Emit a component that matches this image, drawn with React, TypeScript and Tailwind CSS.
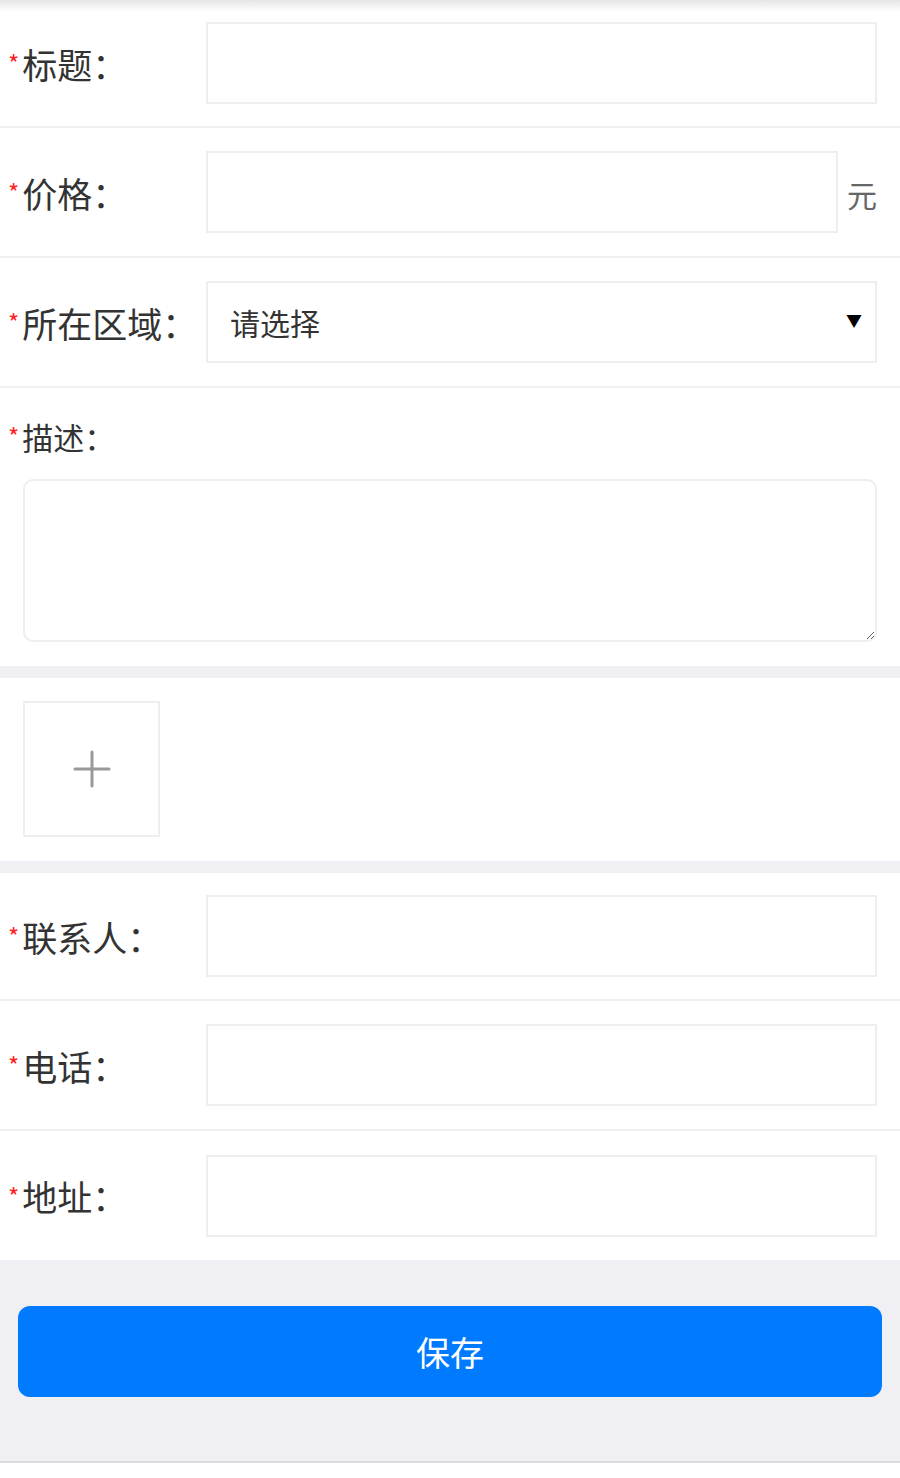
const font = { fontFamily: '"Noto Sans CJK SC", "Noto Sans", sans-serif' };

function Label({ text, size = "text-[35px]" }: { text: string; size?: string }) {
  return (
    <div className={`flex items-center text-[#333] ${size}`}>
      <span className="text-[24px] text-[#ff2020] mr-[3px] leading-none">*</span>
      <span className="leading-none">{text}：</span>
    </div>
  );
}

function Row({ label, children, first }: { label: string; children: React.ReactNode; first?: boolean }) {
  return (
    <div
      className={`flex items-center bg-white border-b-2 border-[#efeff4] pr-[23px] ${first ? "h-[128px]" : "h-[130px]"}`}
    >
      <div className="w-[206px] pl-[8px] shrink-0">
        <Label text={label} />
      </div>
      {children}
    </div>
  );
}

function TextInput() {
  return <input type="text" className="flex-1 min-w-0 h-[82px] border-2 border-[#eeeeee] bg-white outline-none px-4 text-[30px]" />;
}

export default function App() {
  return (
    <div className="w-[900px] min-h-[1478px] bg-white" style={font}>
      {/* top section */}
      <div className="relative">
        <div className="absolute top-0 left-0 right-0 h-[12px] bg-gradient-to-b from-[#e6e6e6] to-transparent pointer-events-none" />
        <Row label="标题" first>
          <TextInput />
        </Row>
        <Row label="价格">
          <TextInput />
          <span className="w-[39px] text-right text-[30px] text-[#666] leading-none pt-[4px]">元</span>
        </Row>
        <Row label="所在区域">
          <div className="flex-1 h-[82px] border-2 border-[#eeeeee] flex items-center justify-between pl-[22px] pr-[13px]">
            <span className="text-[30px] text-[#333] leading-none">请选择</span>
            <span className="text-[16px] text-black leading-none -mt-[4px]">▼</span>
          </div>
        </Row>
        {/* description */}
        <div className="bg-white px-[23px] pt-[30px] pb-[24px]">
          <div className="-ml-[15px] h-[36px] flex items-center">
            <Label text="描述" size="text-[31px]" />
          </div>
          <textarea className="mt-[25px] block w-full h-[163px] border-2 border-[#eeeeee] rounded-[10px] outline-none resize-y p-3 text-[28px]" />
        </div>
      </div>

      <div className="h-[12px] bg-[#efeff4]" />

      {/* upload */}
      <div className="bg-white px-[23px] pt-[23px] pb-[24px]">
        <div className="w-[137px] h-[136px] border-2 border-[#eeeeee] flex items-center justify-center">
          <svg width="38" height="38" viewBox="0 0 38 38" fill="none" stroke="#999" strokeWidth="3" strokeLinecap="round">
            <path d="M19 2v34M2 19h34" />
          </svg>
        </div>
      </div>

      <div className="h-[12px] bg-[#efeff4]" />

      <Row label="联系人" first>
        <TextInput />
      </Row>
      <Row label="电话">
        <TextInput />
      </Row>
      <div className="flex items-center bg-white h-[129px] pr-[23px]">
        <div className="w-[206px] pl-[8px] shrink-0">
          <Label text="地址" />
        </div>
        <TextInput />
      </div>

      {/* footer */}
      <div className="bg-[#efeff4] px-[18px] pt-[46px] pb-[64px] border-b-2 border-[#dcdce0]">
        <button className="w-full h-[91px] rounded-[12px] bg-[#007aff] text-white text-[34px] leading-none">保存</button>
      </div>
    </div>
  );
}
